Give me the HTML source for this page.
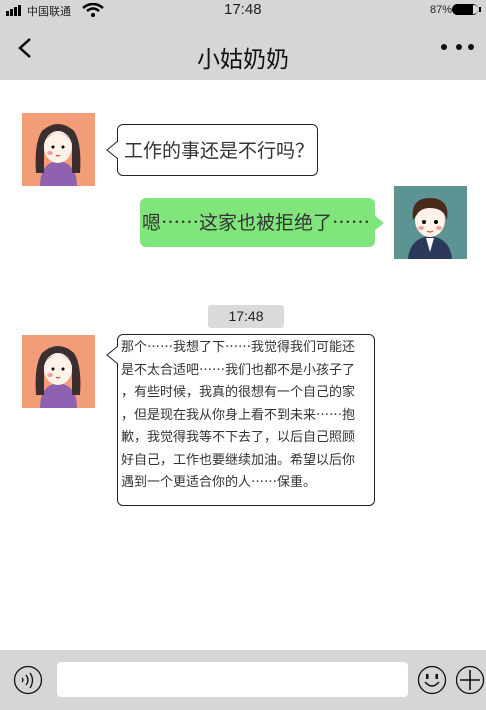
<!DOCTYPE html>
<html><head><meta charset="utf-8"><style>
*{margin:0;padding:0;box-sizing:border-box}
body{width:486px;height:710px;background:#fff;position:relative;overflow:hidden;font-family:"Liberation Sans","Noto Sans CJK SC",sans-serif;color:#222}
.cjk{font-family:"Noto Sans CJK SC","WenQuanYi Zen Hei",sans-serif}
.hdr{position:absolute;left:0;top:0;width:486px;height:80px;background:#d6d6d6}
.abs{position:absolute}
.bub{position:absolute;border:1px solid #222;border-radius:6px;background:#fff}
.long{font-size:13px;line-height:22.5px;padding:0 0 0 3px;white-space:nowrap;color:#333}
.long span{display:block;height:22.5px}
</style></head><body>
<div class="hdr"></div>
<div class="abs" style="left:6px;top:5px;width:17px;height:11px">
<div class="abs" style="left:0;top:6px;width:3px;height:5px;background:#000"></div>
<div class="abs" style="left:4px;top:4px;width:3px;height:7px;background:#000"></div>
<div class="abs" style="left:8px;top:2px;width:3px;height:9px;background:#000"></div>
<div class="abs" style="left:12px;top:0;width:3px;height:11px;background:#000"></div>
</div>
<div class="abs" style="left:27px;top:3px;font-size:11px">中国联通</div>
<svg class="abs" style="left:82px;top:3px" width="22" height="14" viewBox="0 0 22 14"><path d="M1 5 Q11 -3 21 5" stroke="#000" stroke-width="2.5" fill="none"/><path d="M5 8 Q11 3 17 8" stroke="#000" stroke-width="2.5" fill="none"/><circle cx="11" cy="12" r="2" fill="#000"/></svg>
<div class="abs" style="left:224px;top:1px;font-size:15px">17:48</div>
<div class="abs" style="left:430px;top:4px;font-size:11px">87%</div>
<div class="abs" style="left:452px;top:4px;width:26px;height:11px;border-radius:6px;background:#000"></div>
<div class="abs" style="left:473px;top:5px;width:5px;height:9px;border-radius:0 5px 5px 0;background:#ddd"></div>
<div class="abs" style="left:479px;top:7px;width:2px;height:5px;background:#000"></div>
<svg class="abs" style="left:16px;top:37px" width="18" height="22"><path d="M14 2 L4 11 L14 20" stroke="#000" stroke-width="2.5" fill="none"/></svg>
<div class="abs cjk" style="left:0;width:486px;top:40px;text-align:center;font-size:23px;line-height:34px;color:#111">小姑奶奶</div>
<div class="abs" style="left:441px;top:44px;width:6px;height:6px;border-radius:3px;background:#111"></div>
<div class="abs" style="left:456px;top:44px;width:6px;height:6px;border-radius:3px;background:#111"></div>
<div class="abs" style="left:468px;top:44px;width:6px;height:6px;border-radius:3px;background:#111"></div>

<svg class="abs" style="left:22px;top:113px" width="73" height="73" viewBox="0 0 73 73"><rect width="73" height="73" fill="#f39c78"/><path d="M18 73 Q18 50 36 48 Q55 50 55 73Z" fill="#8e62b0"/><path d="M14 60 Q12 30 20 18 Q36 4 52 18 Q60 30 58 60 L50 60 L50 30 L22 30 L22 60Z" fill="#3a2e2e"/><ellipse cx="36" cy="34" rx="14" ry="16" fill="#fff2e8"/><path d="M22 28 Q36 12 50 28 Q44 20 36 20 Q28 20 22 28Z" fill="#3a2e2e"/><circle cx="31" cy="34" r="1.5" fill="#000"/><circle cx="41" cy="34" r="1.5" fill="#000"/><ellipse cx="28" cy="40" rx="3" ry="2" fill="#f5a0a0"/><path d="M34 42 Q36 44 38 42" stroke="#c33" fill="none"/></svg>
<svg class="abs" style="left:394px;top:186px" width="73" height="73" viewBox="0 0 73 73"><rect width="73" height="73" fill="#5b9493"/><path d="M14 73 Q16 52 36 50 Q56 52 58 73Z" fill="#2b3a5a"/><path d="M32 52 L36 66 L40 52Z" fill="#fff"/><ellipse cx="36" cy="34" rx="15" ry="17" fill="#fff2e8"/><path d="M19 34 Q16 12 36 12 Q56 12 53 34 Q50 22 36 22 Q26 22 22 30Z" fill="#4a2a1a"/><circle cx="30" cy="36" r="2" fill="#000"/><circle cx="42" cy="36" r="2" fill="#000"/><ellipse cx="27" cy="42" rx="3" ry="2" fill="#f5a0a0"/><ellipse cx="45" cy="42" rx="3" ry="2" fill="#f5a0a0"/><path d="M33 45 Q36 47 39 45" stroke="#c33" fill="none"/></svg>
<svg class="abs" style="left:22px;top:335px" width="73" height="73" viewBox="0 0 73 73"><rect width="73" height="73" fill="#f39c78"/><path d="M18 73 Q18 50 36 48 Q55 50 55 73Z" fill="#8e62b0"/><path d="M14 60 Q12 30 20 18 Q36 4 52 18 Q60 30 58 60 L50 60 L50 30 L22 30 L22 60Z" fill="#3a2e2e"/><ellipse cx="36" cy="34" rx="14" ry="16" fill="#fff2e8"/><path d="M22 28 Q36 12 50 28 Q44 20 36 20 Q28 20 22 28Z" fill="#3a2e2e"/><circle cx="31" cy="34" r="1.5" fill="#000"/><circle cx="41" cy="34" r="1.5" fill="#000"/><ellipse cx="28" cy="40" rx="3" ry="2" fill="#f5a0a0"/><path d="M34 42 Q36 44 38 42" stroke="#c33" fill="none"/></svg>

<div class="bub cjk" style="left:117px;top:124px;width:201px;height:52px;font-size:19px;line-height:26px;padding:12px 0 0 6px;color:#333">工作的事还是不行吗？</div>
<svg class="abs" style="left:106px;top:140px" width="13" height="20"><path d="M12 1 L1 10 L12 19" stroke="#222" fill="#fff"/><rect x="12" y="0" width="2" height="20" fill="#fff"/></svg>

<div class="abs cjk" style="left:140px;top:198px;width:235px;height:49px;background:#80e57a;border-radius:6px;font-size:19px;line-height:26px;padding:11px 0 0 2px;color:#333;white-space:nowrap">嗯……这家也被拒绝了……</div>
<svg class="abs" style="left:374px;top:214px" width="12" height="18"><path d="M0 1 L10 9 L0 17Z" fill="#80e57a"/></svg>

<div class="abs" style="left:208px;top:305px;width:76px;height:23px;background:#dadada;border-radius:3px;text-align:center;font-size:14px;line-height:23px">17:48</div>

<div class="bub long cjk" style="left:117px;top:334px;width:258px;height:172px">
<span>那个……我想了下……我觉得我们可能还</span>
<span>是不太合适吧……我们也都不是小孩子了</span>
<span>，有些时候，我真的很想有一个自己的家</span>
<span>，但是现在我从你身上看不到未来……抱</span>
<span>歉，我觉得我等不下去了，以后自己照顾</span>
<span>好自己，工作也要继续加油。希望以后你</span>
<span>遇到一个更适合你的人……保重。</span>
</div>
<svg class="abs" style="left:106px;top:345px" width="13" height="20"><path d="M12 1 L1 10 L12 19" stroke="#222" fill="#fff"/><rect x="12" y="0" width="2" height="20" fill="#fff"/></svg>

<div class="abs" style="left:0;top:650px;width:486px;height:60px;background:#d6d6d6"></div>
<svg class="abs" style="left:13px;top:665px" width="30" height="30"><circle cx="15" cy="15" r="13.5" stroke="#111" stroke-width="1.3" fill="none"/><path d="M9 13 Q11 15 9 17" stroke="#111" fill="none" stroke-width="1.3"/><path d="M13 10 Q17 15 13 20" stroke="#111" fill="none" stroke-width="1.3"/><path d="M17 8 Q22 15 17 23" stroke="#111" fill="none" stroke-width="1.3"/></svg>
<div class="abs" style="left:57px;top:662px;width:351px;height:35px;background:#fff;border-radius:4px"></div>
<svg class="abs" style="left:417px;top:665px" width="30" height="30"><circle cx="15" cy="15" r="13.5" stroke="#111" stroke-width="1.3" fill="none"/><rect x="9" y="9" width="2.5" height="5" fill="#111"/><rect x="18.5" y="9" width="2.5" height="5" fill="#111"/><path d="M8 17 Q15 25 22 17" stroke="#111" fill="none" stroke-width="1.5"/></svg>
<svg class="abs" style="left:455px;top:665px" width="30" height="30"><circle cx="15" cy="15" r="13.5" stroke="#111" stroke-width="1.3" fill="none"/><path d="M15 5 V25 M5 15 H25" stroke="#111" stroke-width="1.6"/></svg>
</body></html>
